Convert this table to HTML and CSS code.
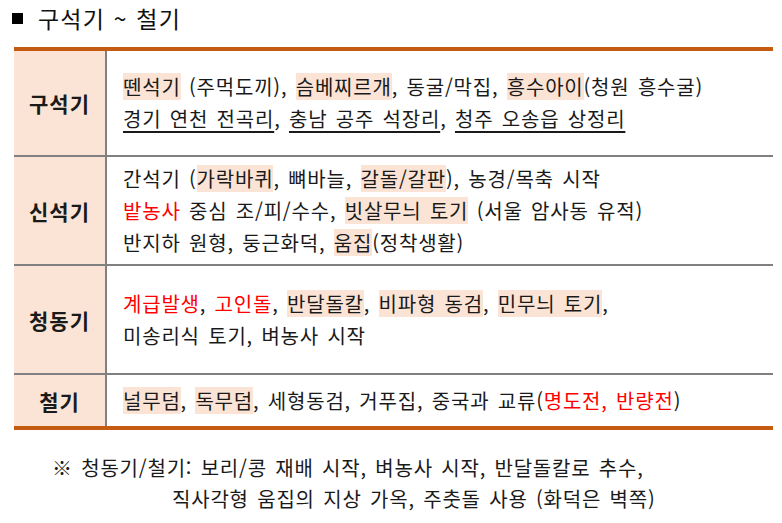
FILE: index.html
```html
<!DOCTYPE html>
<html lang="ko">
<head>
<meta charset="utf-8">
<link rel="stylesheet" href="styles.css">
</head>
<body>
<div class="title"><span class="sq"></span><span class="ttext">구석기 ~ 철기</span></div>
<div class="tbl">
  <div class="row r1">
    <div class="th">구석기</div>
    <div class="td">
      <div class="ln"><span class="hl">뗀석기</span> (주먹도끼), <span class="hl">슴베찌르개</span>, 동굴/막집, <span class="hl">흥수아이</span>(청원 흥수굴)</div>
      <div class="ln"><span class="ul">경기 연천 전곡리</span>, <span class="ul">충남 공주 석장리</span>, <span class="ul">청주 오송읍 상정리</span></div>
    </div>
  </div>
  <div class="row r2">
    <div class="th">신석기</div>
    <div class="td">
      <div class="ln">간석기 (<span class="hl">가락바퀴</span>, 뼈바늘, <span class="hl">갈돌/갈판</span>), 농경/목축 시작</div>
      <div class="ln"><span class="red">밭농사</span> 중심 조/피/수수, <span class="hl">빗살무늬 토기</span> (서울 암사동 유적)</div>
      <div class="ln">반지하 원형, 둥근화덕, <span class="hl">움집</span>(정착생활)</div>
    </div>
  </div>
  <div class="row r3">
    <div class="th">청동기</div>
    <div class="td">
      <div class="ln"><span class="red">계급발생</span>, <span class="red">고인돌</span>, <span class="hl">반달돌칼</span>, <span class="hl">비파형 동검</span>, <span class="hl">민무늬 토기</span>,</div>
      <div class="ln">미송리식 토기, 벼농사 시작</div>
    </div>
  </div>
  <div class="row r4">
    <div class="th">철기</div>
    <div class="td">
      <div class="ln"><span class="hl">널무덤</span>, <span class="hl">독무덤</span>, 세형동검, 거푸집, 중국과 교류(<span class="red">명도전, 반량전</span>)</div>
    </div>
  </div>
</div>
<div class="note">
  <div class="n1">※ 청동기/철기: 보리/콩 재배 시작, 벼농사 시작, 반달돌칼로 추수,</div>
  <div class="n2">직사각형 움집의 지상 가옥, 주춧돌 사용 (화덕은 벽쪽)</div>
</div>
</body>
</html>
```
FILE: styles.css
```css
html, body {
  margin: 0;
  padding: 0;
  background: #ffffff;
}
body {
  font-family: "Noto Sans CJK KR", "Noto Sans", sans-serif;
  color: #1a1a1a;
  width: 782px;
  height: 523px;
  overflow: hidden;
}
.title {
  display: flex;
  align-items: center;
  height: 36px;
  padding-left: 12px;
  margin-bottom: 11px;
}
.sq {
  width: 11px;
  height: 11px;
  background: #000;
  margin-right: 15px;
}
.ttext {
  font-size: 23px;
  letter-spacing: 1.2px;
  word-spacing: 1px;
  line-height: 36px;
  color: #111;
}
.tbl {
  margin-left: 14px;
  width: 759px;
  border-top: 4px solid #c55a11;
  border-bottom: 4px solid #c55a11;
}
.row {
  display: grid;
  grid-template-columns: 93px 1fr;
}
.row + .row {
  border-top: 2px solid #808080;
}
.r1 { height: 104px; }
.r2 { height: 107px; }
.r3 { height: 107px; }
.r4 { height: 51px; }
.th {
  background: #fbe4d5;
  border-right: 2px solid #808080;
  display: flex;
  align-items: center;
  justify-content: center;
  font-weight: bold;
  font-size: 21px;
  letter-spacing: 1px;
  color: #1a1a1a;
}
.td {
  display: flex;
  flex-direction: column;
  justify-content: center;
  padding-left: 16px;
  font-size: 20px;
  letter-spacing: 0.8px;
  word-spacing: 2px;
}
.ln {
  line-height: 32px;
  white-space: nowrap;
}
.hl {
  display: inline-block;
  background: #fbe4d5;
  line-height: 27px;
}
.red {
  color: #ff0000;
}
.ul {
  text-decoration: underline;
  text-decoration-thickness: 1.5px;
  text-underline-offset: 4px;
}
.note {
  padding-top: 22px;
  font-size: 20px;
  letter-spacing: 0.8px;
  word-spacing: 2px;
}
.n1 {
  padding-left: 52px;
  line-height: 31px;
  white-space: nowrap;
}
.n2 {
  padding-left: 172px;
  line-height: 31px;
  white-space: nowrap;
}
```
